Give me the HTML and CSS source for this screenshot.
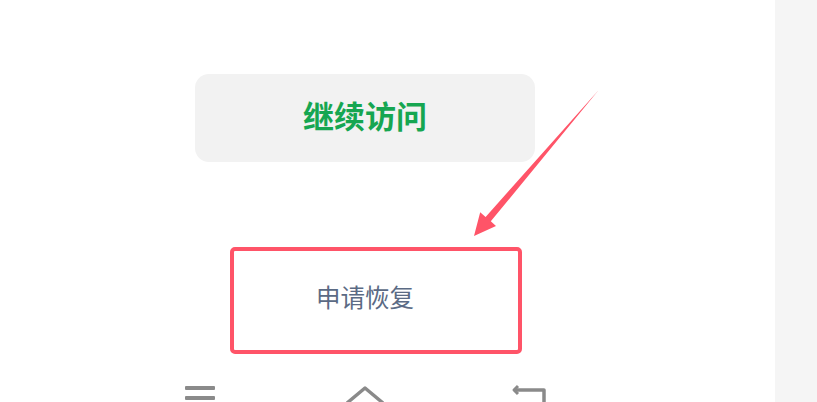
FILE: index.html
```html
<!DOCTYPE html>
<html lang="zh-CN">
<head>
    <meta charset="UTF-8">
    <meta name="viewport" content="width=device-width, initial-scale=1.0">
    <title>继续访问</title>
    <link rel="stylesheet" href="styles.css">
</head>
<body>
    <div class="screen">
        <div class="content">
            <button class="btn-continue" type="button">继续访问</button>
            <div class="restore">申请恢复</div>
            <div class="navbar">
                <div class="nav-cell">
                    <svg width="30" height="16" viewBox="0 0 30 16">
                        <rect x="0" y="0" width="30" height="4" rx="1" fill="#8a8a8a"/>
                        <rect x="0" y="10" width="30" height="4" rx="1" fill="#8a8a8a"/>
                    </svg>
                </div>
                <div class="nav-cell">
                    <svg width="40" height="16" viewBox="0 0 40 16">
                        <polyline points="2,17 20,2 38,17" fill="none" stroke="#8a8a8a" stroke-width="3.5" stroke-linejoin="round"/>
                    </svg>
                </div>
                <div class="nav-cell">
                    <svg width="36" height="16" viewBox="0 0 36 16">
                        <polyline points="6,0 2,4 6,8" fill="none" stroke="#8a8a8a" stroke-width="3" stroke-linejoin="round"/>
                        <polyline points="2,4 32,4 32,18" fill="none" stroke="#8a8a8a" stroke-width="3.5" stroke-linejoin="round"/>
                    </svg>
                </div>
            </div>
        </div>

        <!-- annotation over the screenshot -->
        <div class="mark-box"></div>
        <svg class="mark-arrow" width="775" height="402" viewBox="0 0 775 402">
            <polygon points="598.5,90.3 490.8,221.3 496,226 474,236 480.2,212.3 485.6,217" fill="#ff5468"/>
        </svg>
    </div>
    <div class="side"></div>
</body>
</html>
```

FILE: styles.css
```css
* {
    margin: 0;
    padding: 0;
    box-sizing: border-box;
}

body {
    font-family: "Noto Sans CJK SC", "Noto Sans", sans-serif;
    display: flex;
    width: 817px;
    height: 402px;
    overflow: hidden;
    background: #fff;
}

.screen {
    position: relative;
    width: 775px;
    height: 402px;
    background: #fff;
    overflow: hidden;
}

.side {
    width: 42px;
    height: 402px;
    background: #f5f5f5;
}

.content {
    width: 730px;
    display: flex;
    flex-direction: column;
    align-items: center;
    padding-top: 74px;
}

.btn-continue {
    width: 340px;
    height: 88px;
    border: none;
    border-radius: 14px;
    background: #f2f2f2;
    color: #16a651;
    font-family: inherit;
    font-size: 31px;
    font-weight: bold;
    line-height: 1;
    padding-bottom: 7px;
    display: flex;
    align-items: center;
    justify-content: center;
}

.restore {
    margin-top: 85px;
    height: 106px;
    display: flex;
    align-items: center;
    justify-content: center;
    font-size: 24.5px;
    line-height: 1;
    color: #5b6a84;
    padding-bottom: 5px;
}

.navbar {
    margin-top: 33px;
    display: flex;
    justify-content: center;
}

.nav-cell {
    width: 165px;
    display: flex;
    justify-content: center;
}

.nav-cell svg {
    display: block;
    overflow: visible;
}

.mark-box {
    position: absolute;
    left: 230px;
    top: 247px;
    width: 292px;
    height: 107px;
    border: 4px solid #ff5468;
    border-radius: 5px;
}

.mark-arrow {
    position: absolute;
    left: 0;
    top: 0;
}
```
